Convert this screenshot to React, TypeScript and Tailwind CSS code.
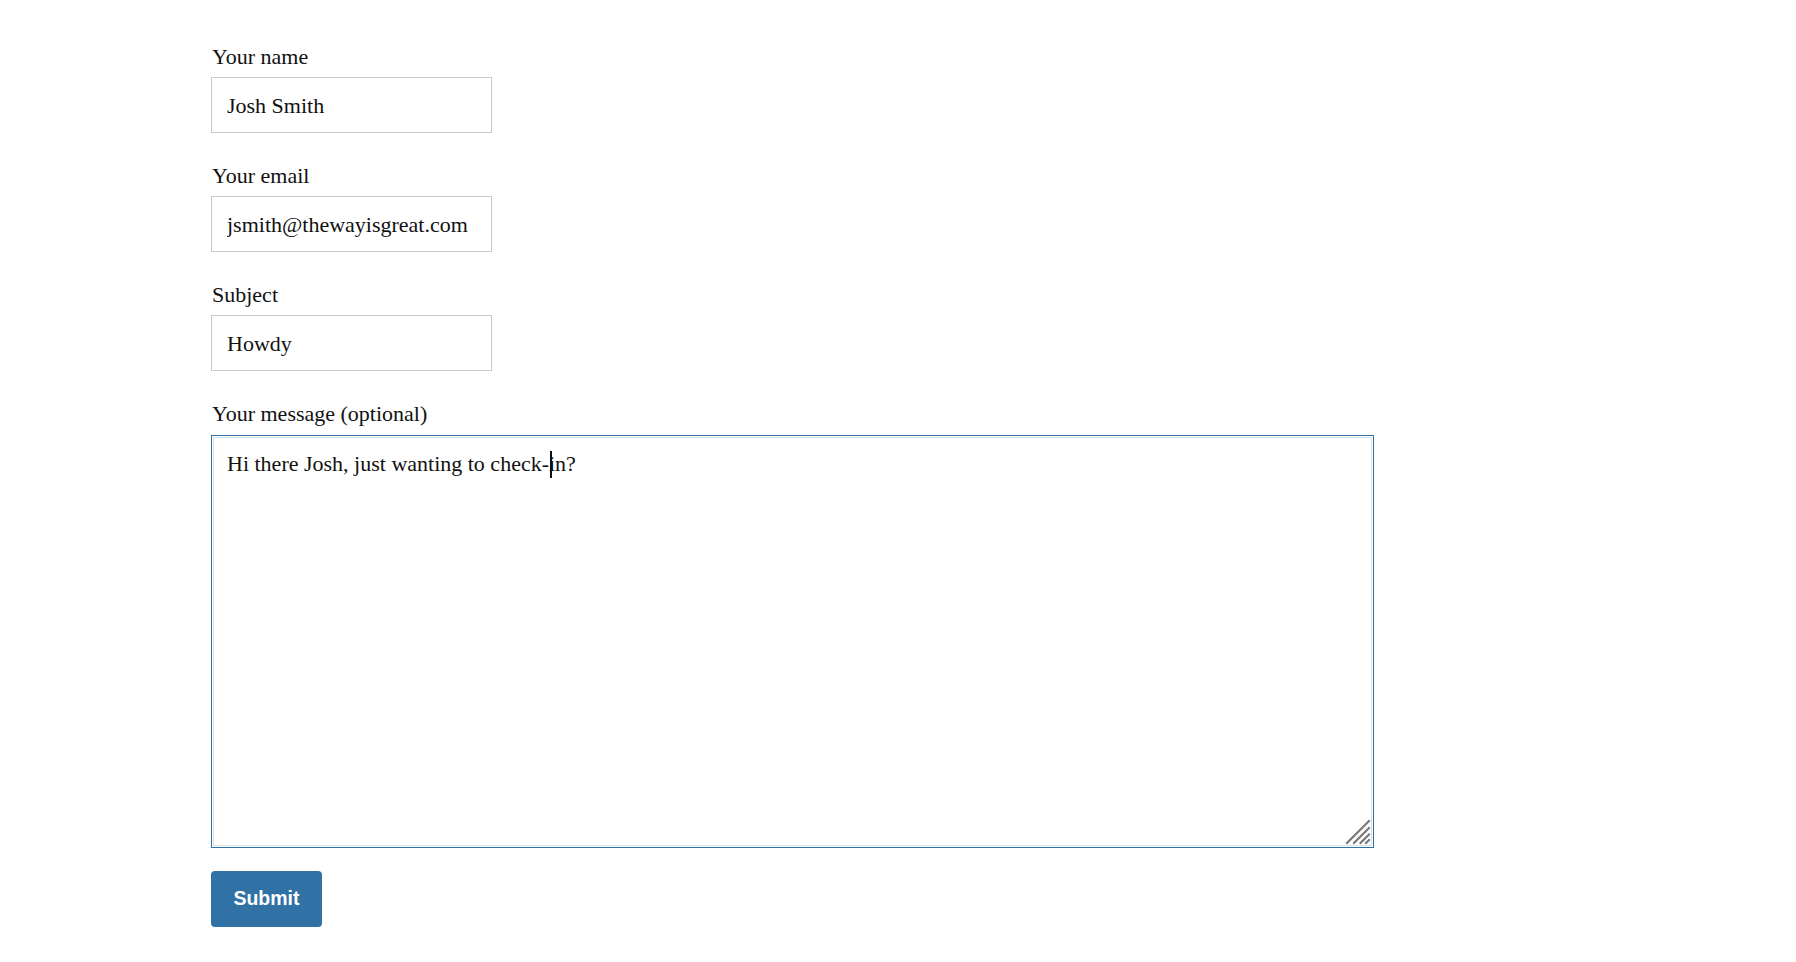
import React from 'react';

const serif = 'font-["Liberation_Serif","Times_New_Roman",serif]';

const fields = [
  { label: 'Your name', value: 'Josh Smith' },
  { label: 'Your email', value: 'jsmith@thewayisgreat.com' },
  { label: 'Subject', value: 'Howdy' },
];

const message = 'Hi there Josh, just wanting to check-in?';

const App: React.FC = () => {
  return (
    <div className={`min-h-screen bg-white text-[#111] ${serif}`}>
      <form className="pl-[211px] pt-[44px]" onSubmit={(e) => e.preventDefault()}>
        {fields.map((f) => (
          <div key={f.label} className="mb-[30px]">
            <label className="block text-[22px] leading-[26px] pl-[1px]">{f.label}</label>
            <input
              type="text"
              defaultValue={f.value}
              className="mt-[7px] block w-[281px] h-[56px] border border-[#c9c9c9] bg-white pl-[15px] pr-[14px] pt-[2px] text-[22px] leading-[26px] text-[#111] outline-none"
            />
          </div>
        ))}

        {/* Message */}
        <div>
          <label className="block text-[22px] leading-[26px] pl-[1px]">Your message (optional)</label>
          <div className="relative mt-[8px] w-[1163px] h-[413px] border border-[#2f6fa6] p-[1px]">
            <textarea
              defaultValue={message}
              className="block w-full h-full resize-none border border-[#d6e0e7] bg-white px-[13px] pt-[13px] text-[22px] leading-[26px] text-[#111] outline-none"
            />
            {/* caret */}
            <div className="pointer-events-none absolute left-[2px] top-[2px] pl-[14px] pt-[13px] text-[22px] leading-[26px] whitespace-pre">
              <span className="invisible">Hi there Josh, just wanting to check-</span>
              <span className="inline-block w-[1.5px] h-[27px] -mb-[6px] bg-[#111]" />
            </div>
            {/* resize grip */}
            <svg
              className="pointer-events-none absolute right-[2px] bottom-[2px]"
              width="26"
              height="26"
              viewBox="0 0 26 26"
            >
              <g stroke="#777" strokeWidth="2.2" strokeLinecap="square">
                <line x1="24" y1="2" x2="2" y2="24" />
                <line x1="24" y1="9" x2="9" y2="24" />
                <line x1="24" y1="15.5" x2="15.5" y2="24" />
                <line x1="24" y1="21" x2="21" y2="24" />
              </g>
            </svg>
          </div>
        </div>

        <button
          type="submit"
          className='mt-[23px] block w-[111px] h-[56px] rounded-[4px] bg-[#3071a6] text-white font-["Liberation_Sans",Arial,sans-serif] font-bold text-[19.5px] leading-none cursor-pointer'
        >
          Submit
        </button>
      </form>
    </div>
  );
};

export default App;
